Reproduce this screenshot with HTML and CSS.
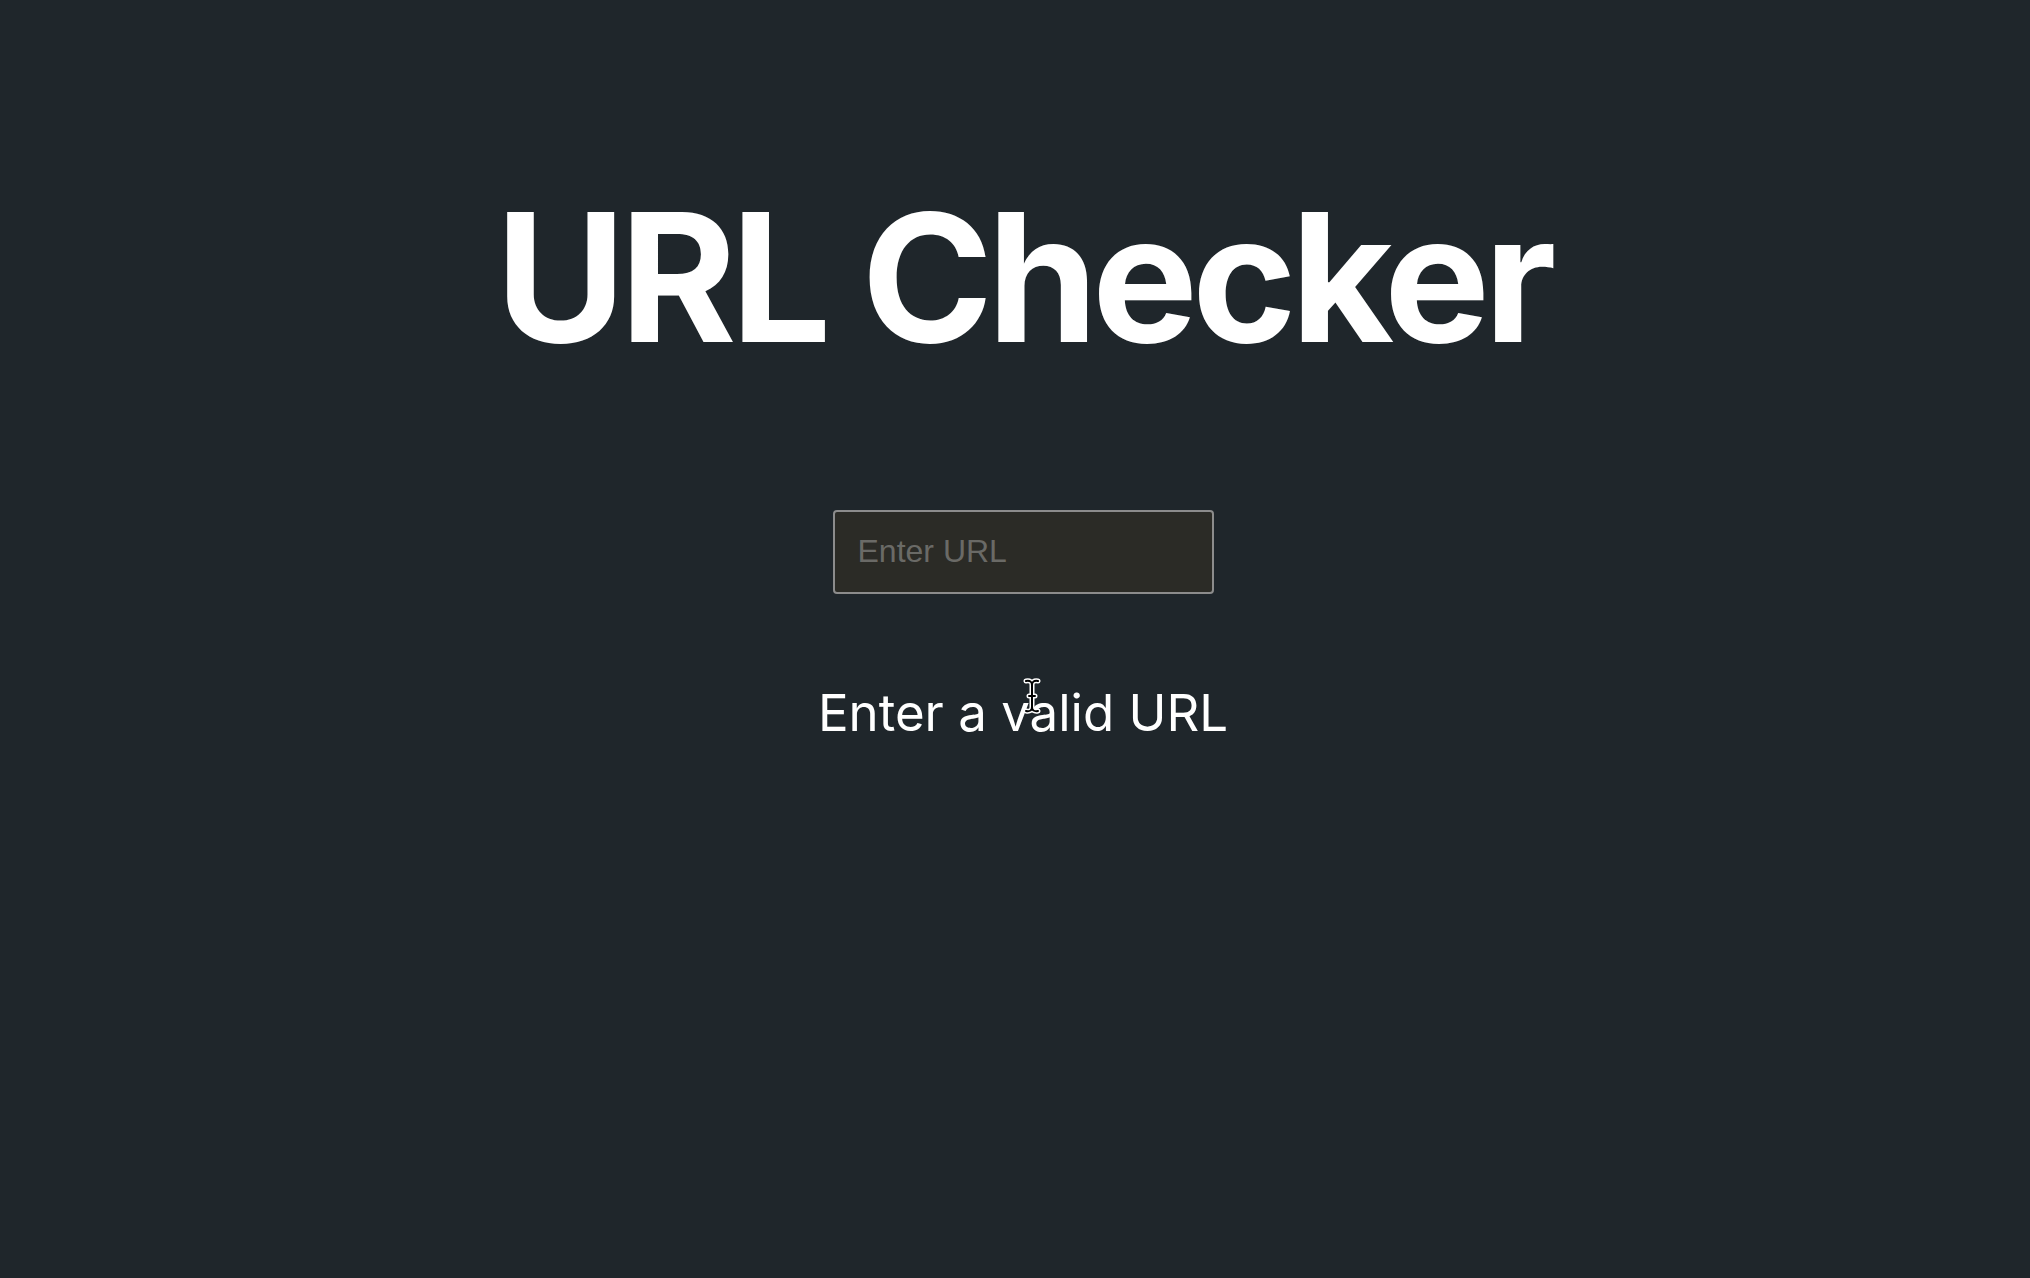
FILE: index.html
```html
<!DOCTYPE html>
<html lang="en">
<head>
<meta charset="utf-8">
<title>URL Checker</title>
<link rel="stylesheet" href="styles.css">
</head>
<body>
<main class="app">
  <h1 class="title">URL Checker</h1>
  <input class="url-input" type="text" placeholder="Enter URL">
  <p class="message">Enter a valid URL</p>
</main>
<svg class="cursor" width="18" height="36" viewBox="0 0 18 36" aria-hidden="true">
  <g fill="none" stroke-linecap="round" stroke-linejoin="round">
    <path d="M3 3 Q9 2 9 7 L9 29 Q9 34 3 33 M15 3 Q9 2 9 7 M9 29 Q9 34 15 33 M6 18 L12 18" stroke="#ffffff" stroke-width="5"/>
    <path d="M3 3 Q9 2 9 7 L9 29 Q9 34 3 33 M15 3 Q9 2 9 7 M9 29 Q9 34 15 33 M6 18 L12 18" stroke="#000000" stroke-width="2"/>
  </g>
</svg>
</body>
</html>
```
FILE: styles.css
```css
html, body {
  margin: 0;
  padding: 0;
  height: 100%;
}
body {
  background: #1f262b;
  color: #ffffff;
  font-family: Inter, "Noto Sans", sans-serif;
  position: relative;
}
.app {
  display: flex;
  flex-direction: column;
  align-items: center;
  padding-top: 171px;
  padding-left: 16px;
}
.title {
  margin: 0;
  font-size: 178px;
  font-weight: 700;
  letter-spacing: -6px;
  line-height: 1.2;
}
.url-input {
  margin-top: 125px;
  width: 381px;
  height: 84px;
  box-sizing: border-box;
  padding: 0 23px;
  border: 2px solid #8c8c8c;
  border-radius: 4px;
  background: #2b2b26;
  color: #ddd;
  font-family: "Liberation Sans", Arial, sans-serif;
  font-size: 32px;
  outline: none;
}
.url-input::placeholder {
  color: #6a6a66;
}
.message {
  margin: 88px 0 0;
  font-size: 51px;
  font-weight: 400;
}
.cursor {
  position: absolute;
  left: 1023px;
  top: 678px;
}
```
